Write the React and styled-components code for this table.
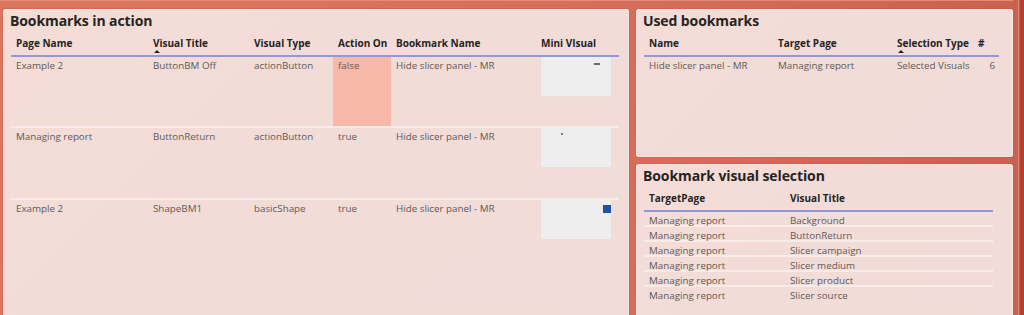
import styled, { createGlobalStyle } from 'styled-components';

const GlobalStyle = createGlobalStyle`
  * { box-sizing: border-box; }
  body {
    margin: 0;
    font-family: "Open Sans", "Noto Sans", sans-serif;
  }
`;

const Page = styled.div`
  width: 1024px;
  height: 315px;
  overflow: hidden;
  display: flex;
  align-items: flex-start;
  padding: 9px 0 0 3px;
  background: linear-gradient(to right, #dd7661 0%, #d66e5b 60%, #c8624f 100%);
  box-shadow: inset 0 1px 0 #e28c78;
`;

const Panel = styled.section`
  display: flex;
  flex-direction: column;
  width: ${p => p.width}px;
  height: ${p => p.height}px;
  flex: ${p => (p.grow ? 1 : 'none')};
  padding: 1px 0 0 6px;
  background: linear-gradient(135deg, #f5dcd6 0%, #f2dcd8 55%, #f1dcd9 100%);
  border: 1px solid #f6e4e0;
  border-radius: 2px;
  box-shadow: 0 0 0 1px rgba(190, 90, 70, 0.35);
`;

const RightColumn = styled.div`
  width: 377px;
  margin-left: 7px;
  height: 330px;
  display: flex;
  flex-direction: column;
  gap: 7px;
`;

const EdgeStrip = styled.div`
  width: 11px;
  align-self: stretch;
  margin-top: -9px;
  background: linear-gradient(to right, #c7614f 0 5px, #d98a79 5px 6px, #c25644 6px 7px, #b63f2e 7px);
`;

const Title = styled.h2`
  margin: 0;
  font-size: 14px;
  line-height: 20px;
  font-weight: 700;
  color: #252423;
  letter-spacing: -0.1px;
`;

const Grid = styled.div`
  display: grid;
  grid-template-columns: ${p => p.cols};
  margin-left: 1px;
  width: max-content;
`;

const HeadCell = styled.div`
  position: relative;
  height: 26px;
  padding-left: 5px;
  display: flex;
  align-items: center;
  font-size: 10px;
  font-weight: 700;
  color: #252423;
  white-space: nowrap;
  border-bottom: 2px solid #9396dc;
`;

const SortArrow = styled.span`
  position: absolute;
  left: 6px;
  bottom: 2px;
  width: 0;
  height: 0;
  border-left: 3px solid transparent;
  border-right: 3px solid transparent;
  border-bottom: 3px solid #252423;
`;

const Cell = styled.div`
  position: relative;
  height: ${p => p.h}px;
  padding: ${p => (p.right ? '1px 4px 0 0' : '1px 0 0 5px')};
  text-align: ${p => (p.right ? 'right' : 'left')};
  font-size: 9.8px;
  line-height: 15px;
  color: #5f5a58;
  white-space: nowrap;
  background: ${p => (p.hot ? '#f8b9a9' : 'transparent')};
  border-bottom: ${p => (p.sep ? '2px solid #f8ebe8' : 'none')};
`;

const MiniBox = styled.div`
  position: relative;
  width: 70px;
  height: 39px;
  margin-top: -1px;
  background: #eeeeee;
`;

const Mark = styled.span`
  position: absolute;
  left: ${p => p.x}px;
  top: ${p => p.y}px;
  width: ${p => p.w}px;
  height: ${p => p.h}px;
  background: ${p => p.color};
`;

const actions = [
  { page: 'Example 2', title: 'ButtonBM Off', type: 'actionButton', on: 'false', mark: { x: 53, y: 6, w: 6, h: 2, color: '#6b6b6b' } },
  { page: 'Managing report', title: 'ButtonReturn', type: 'actionButton', on: 'true', mark: { x: 20, y: 5, w: 2, h: 2, color: '#777' } },
  { page: 'Example 2', title: 'ShapeBM1', type: 'basicShape', on: 'true', mark: { x: 62, y: 5, w: 8, h: 8, color: '#1f52a0' } },
];

const selection = ['Background', 'ButtonReturn', 'Slicer campaign', 'Slicer medium', 'Slicer product', 'Slicer source'];

const BookmarksInAction = () => (
  <Panel width={626} height={330}>
    <Title>Bookmarks in action</Title>
    <Grid cols="137px 101px 84px 58px 145px 83px">
      <HeadCell>Page Name</HeadCell>
      <HeadCell>Visual Title<SortArrow /></HeadCell>
      <HeadCell>Visual Type</HeadCell>
      <HeadCell>Action On</HeadCell>
      <HeadCell>Bookmark Name</HeadCell>
      <HeadCell>Mini VIsual</HeadCell>
      {actions.map((r, i) => {
        const sep = i < actions.length - 1;
        const h = i === 0 ? 71 : 72;
        return [
          <Cell key={`p${i}`} h={h} sep={sep}>{r.page}</Cell>,
          <Cell key={`t${i}`} h={h} sep={sep}>{r.title}</Cell>,
          <Cell key={`y${i}`} h={h} sep={sep}>{r.type}</Cell>,
          <Cell key={`o${i}`} h={h} sep={sep} hot={r.on === 'false'}>{r.on}</Cell>,
          <Cell key={`b${i}`} h={h} sep={sep}>Hide slicer panel - MR</Cell>,
          <Cell key={`m${i}`} h={h} sep={sep}>
            <MiniBox>
              <Mark {...r.mark} />
            </MiniBox>
          </Cell>,
        ];
      })}
    </Grid>
  </Panel>
);

const UsedBookmarks = () => (
  <Panel width={377} height={148}>
    <Title>Used bookmarks</Title>
    <Grid cols="129px 119px 81px 26px">
      <HeadCell>Name</HeadCell>
      <HeadCell>Target Page</HeadCell>
      <HeadCell>Selection Type<SortArrow /></HeadCell>
      <HeadCell>#</HeadCell>
      <Cell h={16}>Hide slicer panel - MR</Cell>
      <Cell h={16}>Managing report</Cell>
      <Cell h={16}>Selected Visuals</Cell>
      <Cell h={16} right>6</Cell>
    </Grid>
  </Panel>
);

const VisualSelection = () => (
  <Panel grow>
    <Title>Bookmark visual selection</Title>
    <Grid cols="141px 208px">
      <HeadCell>TargetPage</HeadCell>
      <HeadCell>Visual Title</HeadCell>
      {selection.map((v, i) => {
        const sep = i < selection.length - 1;
        return [
          <Cell key={`a${i}`} h={15} sep={sep}>Managing report</Cell>,
          <Cell key={`v${i}`} h={15} sep={sep}>{v}</Cell>,
        ];
      })}
    </Grid>
  </Panel>
);

export default function App() {
  return (
    <>
      <GlobalStyle />
      <Page>
        <BookmarksInAction />
        <RightColumn>
          <UsedBookmarks />
          <VisualSelection />
        </RightColumn>
        <EdgeStrip />
      </Page>
    </>
  );
}
